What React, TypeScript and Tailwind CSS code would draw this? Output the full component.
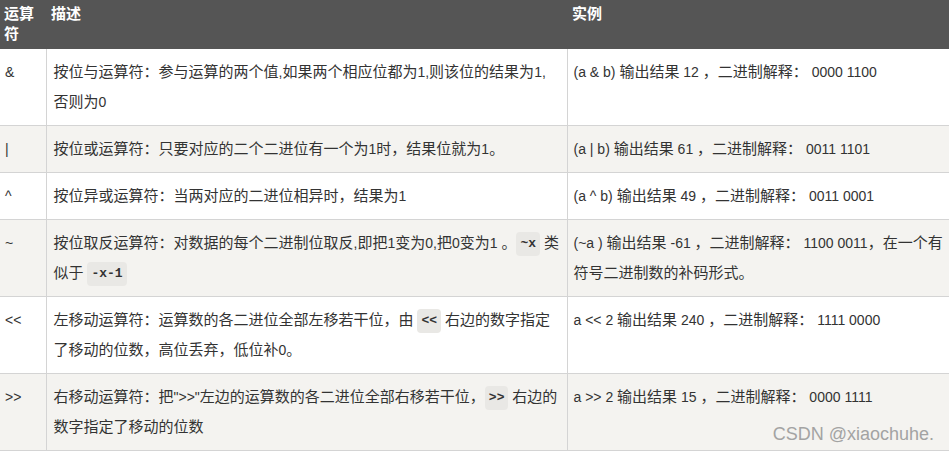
import React from "react";

const font = { fontFamily: '"Liberation Sans", "Noto Sans CJK SC", sans-serif' };

const CJK = /([\u3000-\u303f\u4e00-\u9fff\uff00-\uffef]+)/;

function T({ s }: { s: string }) {
  const parts = s.split(CJK).filter((p) => p.length > 0);
  return (
    <>
      {parts.map((p, i) =>
        CJK.test(p) ? (
          <React.Fragment key={i}>{p}</React.Fragment>
        ) : (
          <span key={i} className="text-[14px]">
            {p}
          </span>
        )
      )}
    </>
  );
}

function Code({ children }: { children: React.ReactNode }) {
  return (
    <code className="inline-block rounded-[4px] bg-[#e9e8e5] px-[4px] font-['Liberation_Mono',monospace] text-[13px] font-bold leading-[24px] text-[#333] align-middle">
      {children}
    </code>
  );
}

const rows: { op: string; desc: React.ReactNode; ex: React.ReactNode }[] = [
  {
    op: "&",
    desc: (
      <>
        <T s="按位与运算符：参与运算的两个值,如果两个相应位都为1,则该位的结果为1," />
        <br />
        <T s="否则为0" />
      </>
    ),
    ex: <T s="(a & b) 输出结果 12 ，二进制解释： 0000 1100" />,
  },
  {
    op: "|",
    desc: <T s="按位或运算符：只要对应的二个二进位有一个为1时，结果位就为1。" />,
    ex: <T s="(a | b) 输出结果 61 ，二进制解释： 0011 1101" />,
  },
  {
    op: "^",
    desc: <T s="按位异或运算符：当两对应的二进位相异时，结果为1" />,
    ex: <T s="(a ^ b) 输出结果 49 ，二进制解释： 0011 0001" />,
  },
  {
    op: "~",
    desc: (
      <>
        <T s="按位取反运算符：对数据的每个二进制位取反,即把1变为0,把0变为1 。" />
        <Code>~x</Code>
        <T s=" 类似于 " />
        <Code>-x-1</Code>
      </>
    ),
    ex: <T s="(~a ) 输出结果 -61 ，二进制解释： 1100 0011，在一个有符号二进制数的补码形式。" />,
  },
  {
    op: "<<",
    desc: (
      <>
        <T s="左移动运算符：运算数的各二进位全部左移若干位，由 " />
        <Code>{"<<"}</Code>
        <T s=" 右边的数字指定了移动的位数，高位丢弃，低位补0。" />
      </>
    ),
    ex: <T s="a << 2 输出结果 240 ，二进制解释： 1111 0000" />,
  },
  {
    op: ">>",
    desc: (
      <>
        <T s={'右移动运算符：把">>"左边的运算数的各二进位全部右移若干位，'} />
        <Code>{">>"}</Code>
        <T s=" 右边的数字指定了移动的位数" />
      </>
    ),
    ex: <T s="a >> 2 输出结果 15 ，二进制解释： 0000 1111" />,
  },
];

export default function App() {
  return (
    <div className="relative h-[452px] w-[949px] overflow-hidden bg-white" style={font}>
      <table className="w-[949px] table-fixed border-collapse text-[15px] text-[#333]">
        <colgroup>
          <col className="w-[46px]" />
          <col className="w-[521px]" />
          <col className="w-[382px]" />
        </colgroup>
        <thead>
          <tr className="bg-[#555555] text-white">
            <th className="h-[49px] px-[4px] py-[4px] text-left align-top text-[15px] font-bold leading-[20px]">运算符</th>
            <th className="px-[5px] py-[4px] text-left align-top text-[15px] font-bold leading-[20px]">描述</th>
            <th className="px-[5px] py-[4px] text-left align-top text-[15px] font-bold leading-[20px]">实例</th>
          </tr>
        </thead>
        <tbody>
          {rows.map((r, i) => (
            <tr key={i} className={i % 2 === 1 ? "bg-[#f4f3f0]" : "bg-white"}>
              <td className="border-b border-r border-[#d4d4d4] py-[8px] pl-[5px] pr-[2px] align-top text-[14px] leading-[30px]">{r.op}</td>
              <td className="border-b border-r border-[#d4d4d4] py-[8px] pl-[7px] pr-[4px] align-top leading-[30px]">{r.desc}</td>
              <td className="border-b border-[#d4d4d4] py-[8px] pl-[6px] pr-[2px] align-top leading-[30px]">{r.ex}</td>
            </tr>
          ))}
        </tbody>
      </table>
      <div className="absolute bottom-[7px] right-[15px] text-[18px] leading-[22px] text-[#a3a3a3]" style={font}>
        CSDN @xiaochuhe.
      </div>
    </div>
  );
}
